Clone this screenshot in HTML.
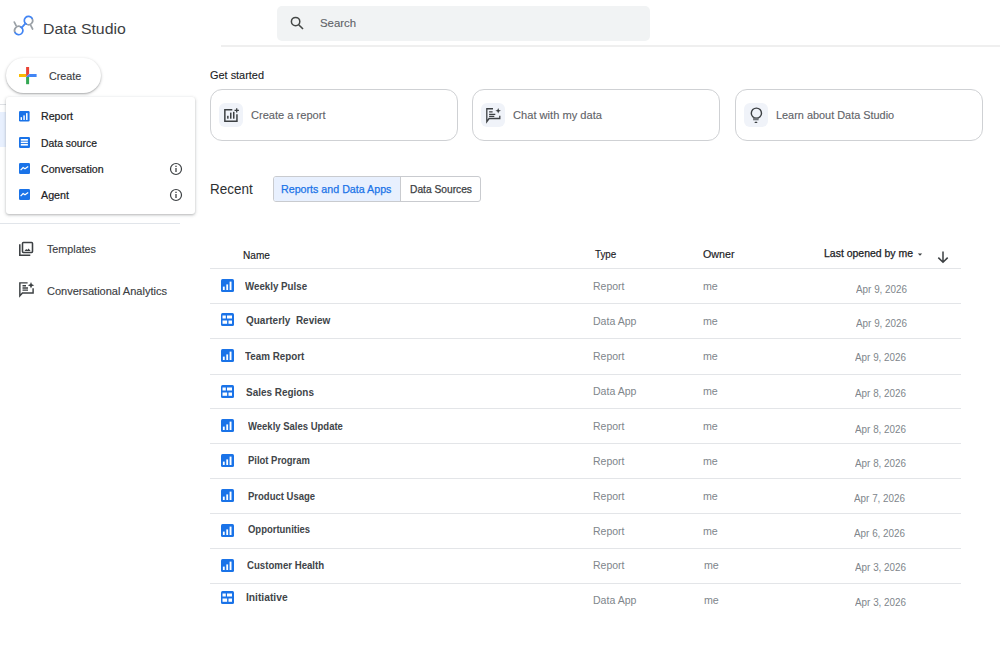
<!DOCTYPE html>
<html><head><meta charset="utf-8">
<style>
*{margin:0;padding:0;box-sizing:border-box}
html,body{width:1000px;height:649px;overflow:hidden;background:#fff}
body{position:relative;font-family:"Liberation Sans",sans-serif;color:#202124}
.a{position:absolute;white-space:nowrap;line-height:1}
.hl{position:absolute;height:1px;background:#dadce0}
.card{position:absolute;top:89px;width:248px;height:52px;border:1px solid #cfd1d4;border-radius:12px;background:#fff}
.ib{position:absolute;left:8px;top:13px;width:24px;height:24px;border-radius:6px;background:#f0f3f9}
.row{position:absolute;left:210px;width:751px;height:1px;background:#e3e5e8}
</style></head><body>
<svg class="a" style="left:10px;top:12px" width="28" height="28" viewBox="0 0 28 28">
 <g fill="none" stroke-width="1.7" stroke-linecap="round">
  <path d="M4.3 10.1L6.1 13.6" stroke="#9aa0a6"/>
  <path d="M20.6 13.1L22.6 17" stroke="#9aa0a6"/>
  <path d="M11.7 15.6L15.5 11.4" stroke="#4285f4"/>
  <path d="M5.1 20.65A4.2 4.2 0 0 1 10.85 14.91" stroke="#9aa0a6"/>
  <path d="M10.85 14.91A4.2 4.2 0 1 1 5.1 20.65" stroke="#4285f4"/>
  <path d="M22.1 6.4A4.2 4.2 0 0 1 16.35 12.14" stroke="#9aa0a6"/>
  <path d="M16.35 12.14A4.2 4.2 0 1 1 22.1 6.4" stroke="#4285f4"/>
 </g>
</svg>
<div class="a" id="t1" style="left:43.20px;top:20.83px;font-size:15.5px;color:#3c4043;transform:scaleX(1.0224);transform-origin:0 0">Data Studio</div>
<div class="a" style="left:277px;top:6px;width:373px;height:34.5px;border-radius:5px;background:#f1f3f4"></div>
<svg class="a" style="left:290px;top:16px" width="14" height="14" viewBox="0 0 14 14"><circle cx="5.6" cy="5.6" r="4.2" fill="none" stroke="#444746" stroke-width="1.5"/><path d="M8.7 8.7L13 13" stroke="#444746" stroke-width="1.6"/></svg>
<div class="a" id="t2" style="left:320.44px;top:17.14px;font-size:11.6px;color:#5f6368;transform:scaleX(0.9845);transform-origin:0 0;-webkit-text-stroke:0.12px #5f6368">Search</div>
<div class="hl" style="left:221px;top:45px;height:2px;width:779px;background:#efefef"></div>
<div class="a" style="left:5.5px;top:58px;width:95px;height:35px;border-radius:18px;background:#fff;box-shadow:0 1px 3px rgba(60,64,67,.36),0 1px 1px rgba(60,64,67,.14)"></div>
<svg class="a" style="left:19px;top:67px" width="18" height="18" viewBox="0 0 18 18">
  <rect x="7.1" y="0" width="3" height="7" fill="#ea4335"/>
  <rect x="7.1" y="10" width="3" height="7.2" fill="#34a853"/>
  <rect x="0" y="7" width="7.1" height="3" fill="#fbbc04"/>
  <rect x="10.1" y="7" width="7.5" height="3" fill="#4285f4"/>
  <path d="M7.1 7H10.1L7.1 10z" fill="#ea4335"/>
  <path d="M10.1 7V10H7.1z" fill="#4285f4"/>
</svg>
<div class="a" id="t3" style="left:49.44px;top:71.28px;font-size:11.2px;color:#3c4043;transform:scaleX(0.9633);transform-origin:0 0;-webkit-text-stroke:0.15px #3c4043">Create</div>
<div class="a" style="left:0;top:112px;width:10px;height:35px;background:#e8f0fe"></div>
<div class="hl" style="left:0;top:104px;width:8px;background:#dfe1e5"></div>
<div class="hl" style="left:0;top:223px;width:180px;background:#e1e5ea"></div>
<div class="a" style="left:6px;top:97px;width:189px;height:117px;background:#fff;border-radius:3px;box-shadow:0 1px 2.5px rgba(60,64,67,.3),0 1px 4px rgba(60,64,67,.12)"></div>
<svg class="a" style="left:19.4px;top:111px" width="10.6" height="10.6" viewBox="0 0 13 13"><rect width="13" height="13" rx="1.5" fill="#1a73e8"/><rect x="1.9" y="7.6" width="1.8" height="3.4" fill="#fff"/><rect x="5.3" y="5.4" width="1.8" height="5.6" fill="#fff"/><rect x="8.6" y="2.6" width="1.9" height="8.4" fill="#fff"/></svg>
<div class="a" id="t4" style="left:41.00px;top:112.33px;font-size:10.2px;color:#202124;transform:scaleX(1.0452);transform-origin:0 0;-webkit-text-stroke:0.2px #202124">Report</div>
<svg class="a" style="left:19.4px;top:137px" width="11" height="11" viewBox="0 0 11 11"><rect width="11" height="11" rx="1.3" fill="#1a73e8"/><rect x="1.8" y="2" width="7.1" height="1.7" fill="#fff"/><rect x="1.8" y="4.6" width="7.1" height="1.4" fill="#fff"/><rect x="1.8" y="6.9" width="7.1" height="1.7" fill="#fff"/></svg>
<div class="a" id="t5" style="left:41.00px;top:138.53px;font-size:10.2px;color:#202124;transform:scaleX(1.0183);transform-origin:0 0;-webkit-text-stroke:0.2px #202124">Data source</div>
<svg class="a" style="left:19.4px;top:163.2px" width="11" height="11" viewBox="0 0 11 11"><rect width="11" height="11" rx="1.3" fill="#1a73e8"/><path d="M1.6 7.1L4.1 4.5 6 5.8 9.2 3.6" fill="none" stroke="#fff" stroke-width="1.2"/></svg>
<div class="a" id="t6" style="left:41.00px;top:164.56px;font-size:10.4px;color:#202124;transform:scaleX(1.0226);transform-origin:0 0;-webkit-text-stroke:0.2px #202124">Conversation</div>
<svg class="a" style="left:19.4px;top:189.4px" width="11" height="11" viewBox="0 0 11 11"><rect width="11" height="11" rx="1.3" fill="#1a73e8"/><path d="M1.6 7.1L4.1 4.5 6 5.8 9.2 3.6" fill="none" stroke="#fff" stroke-width="1.2"/></svg>
<div class="a" id="t7" style="left:41.00px;top:191.14px;font-size:10.4px;color:#202124;transform:scaleX(1.0297);transform-origin:0 0;-webkit-text-stroke:0.2px #202124">Agent</div>
<svg class="a" style="left:169px;top:162px" width="14" height="14" viewBox="0 0 14 14"><circle cx="7" cy="7" r="5.5" fill="none" stroke="#3c4043" stroke-width="1.2"/><rect x="6.35" y="6" width="1.3" height="4" fill="#3c4043"/><rect x="6.35" y="3.7" width="1.3" height="1.3" fill="#3c4043"/></svg>
<svg class="a" style="left:169px;top:188px" width="14" height="14" viewBox="0 0 14 14"><circle cx="7" cy="7" r="5.5" fill="none" stroke="#3c4043" stroke-width="1.2"/><rect x="6.35" y="6" width="1.3" height="4" fill="#3c4043"/><rect x="6.35" y="3.7" width="1.3" height="1.3" fill="#3c4043"/></svg>
<svg class="a" style="left:19px;top:241px" width="15" height="15" viewBox="0 0 15 15"><g fill="none" stroke="#3c4043" stroke-width="1.55"><rect x="3.5" y="1.5" width="10" height="10" rx="0.9"/><path d="M0.8 3.3V14.2H11.3"/></g><path fill="#3c4043" d="M5.5 10l1.7-2 1.1 1.1 1.3-1.5 2 2.4z"/></svg>
<div class="a" id="t8" style="left:46.88px;top:243.65px;font-size:11px;color:#3c4043;transform:scaleX(0.9767);transform-origin:0 0;-webkit-text-stroke:0.15px #3c4043">Templates</div>
<svg class="a" style="left:19px;top:282px" width="16" height="16" viewBox="0 0 16 16"><g fill="none" stroke="#3c4043" stroke-width="1.45"><path d="M8.6 0.85H0.85V13.9L3.4 10.95H14.1V6.3"/><path d="M3.5 3.8H7M3.5 5.9H9M3.5 8.1H9"/></g><path fill="#3c4043" d="M12 0l.95 2.3 2.3.95-2.3.95-.95 2.3-.95-2.3-2.3-.95 2.3-.95z"/></svg>
<div class="a" id="t9" style="left:46.88px;top:285.65px;font-size:11px;color:#3c4043;transform:scaleX(1.0005);transform-origin:0 0;-webkit-text-stroke:0.15px #3c4043">Conversational Analytics</div>
<div class="a" id="t10" style="left:210.00px;top:70.28px;font-size:10.5px;color:#202124;transform:scaleX(1.0396);transform-origin:0 0;-webkit-text-stroke:0.1px #202124">Get started</div>
<div class="card" style="left:210px"><div class="ib"></div></div>
<div class="card" style="left:472px"><div class="ib"></div></div>
<div class="card" style="left:735px"><div class="ib"></div></div>
<svg class="a" style="left:222px;top:107px" width="18" height="18" viewBox="0 0 18 18"><g fill="none" stroke="#3c4043" stroke-width="1.5"><path d="M10.3 2.85H2.85V14.15H14.95V7.3"/><path d="M14.7 1.2V5.6M12.5 3.4H16.9" stroke-width="1.3"/></g><g fill="#3c4043"><rect x="5.1" y="8.8" width="1.5" height="2.9"/><rect x="8" y="5.6" width="1.5" height="6.1"/><rect x="11" y="4.8" width="1.5" height="6.9"/></g></svg>
<div class="a" id="t11" style="left:251.12px;top:109.82px;font-size:10.8px;color:#5f6368;transform:scaleX(1.0262);transform-origin:0 0;-webkit-text-stroke:0.12px #5f6368">Create a report</div>
<svg class="a" style="left:484px;top:106px" width="18" height="18" viewBox="0 0 18 18"><g fill="none" stroke="#3c4043" stroke-width="1.3"><path d="M9 2.75H2.8V15.7L5.1 12.5H15.8V9.8"/><path d="M5.1 5.8H8.6M5.1 8.3H11.3M5.1 10.3H10.3"/></g><path fill="#3c4043" d="M14.2 2l.8 2 2 .8-2 .8-.8 2-.8-2-2-.8 2-.8z"/></svg>
<div class="a" id="t12" style="left:513.06px;top:109.82px;font-size:10.8px;color:#5f6368;transform:scaleX(1.0296);transform-origin:0 0;-webkit-text-stroke:0.12px #5f6368">Chat with my data</div>
<svg class="a" style="left:748px;top:106px" width="16" height="18" viewBox="0 0 16 18"><circle cx="8.4" cy="7.2" r="5.1" fill="none" stroke="#3c4043" stroke-width="1.4"/><rect x="5.1" y="11.7" width="5.5" height="2.6" fill="#6f7378"/><rect x="6.6" y="15.7" width="2.7" height="1.2" rx="0.5" fill="#3c4043"/></svg>
<div class="a" id="t13" style="left:776.06px;top:109.82px;font-size:10.8px;color:#5f6368;transform:scaleX(1.0095);transform-origin:0 0;-webkit-text-stroke:0.12px #5f6368">Learn about Data Studio</div>
<div class="a" id="t14" style="left:209.70px;top:182.04px;font-size:14px;color:#2d2f32;transform:scaleX(0.9623);transform-origin:0 0">Recent</div>
<div class="a" style="left:273px;top:176px;width:208px;height:26px;border:1px solid #c9cbcf;border-radius:3px;background:#fff;overflow:hidden"><div style="position:absolute;left:0;top:0;width:127px;height:24px;background:#e8f0fe;border-right:1px solid #c9cbcf"></div></div>
<div class="a" id="t15" style="left:280.52px;top:184.03px;font-size:10.8px;color:#1a73e8;transform:scaleX(0.9891);transform-origin:0 0;-webkit-text-stroke:0.25px #1a73e8">Reports and Data Apps</div>
<div class="a" id="t16" style="left:409.50px;top:183.75px;font-size:10.8px;color:#3c4043;transform:scaleX(0.9469);transform-origin:0 0;-webkit-text-stroke:0.25px #3c4043">Data Sources</div>
<div class="a" id="t17" style="left:243.12px;top:251.13px;font-size:10.2px;color:#202124;transform:scaleX(0.9897);transform-origin:0 0;-webkit-text-stroke:0.15px #202124">Name</div>
<div class="a" id="t18" style="left:594.62px;top:249.65px;font-size:10.3px;color:#202124;transform:scaleX(0.9543);transform-origin:0 0;-webkit-text-stroke:0.15px #202124">Type</div>
<div class="a" id="t19" style="left:703.38px;top:249.65px;font-size:10.3px;color:#202124;transform:scaleX(1.0373);transform-origin:0 0;-webkit-text-stroke:0.15px #202124">Owner</div>
<div class="a" id="t20" style="left:824.06px;top:249.47px;font-size:10.3px;color:#202124;transform:scaleX(1.0167);transform-origin:0 0;-webkit-text-stroke:0.25px #202124">Last opened by me</div>
<svg class="a" style="left:917px;top:252px" width="6" height="5" viewBox="0 0 6 5"><path d="M0.8 1.5h4.4L3 3.8z" fill="#3c4043"/></svg>
<svg class="a" style="left:936px;top:250px" width="14" height="14" viewBox="0 0 14 14"><path d="M7 1.5v10.5M2.3 7.6L7 12.2l4.7-4.6" fill="none" stroke="#3c4043" stroke-width="1.5"/></svg>
<div class="row" style="top:268px"></div>
<div class="row" style="top:303px"></div>
<div class="row" style="top:338px"></div>
<div class="row" style="top:374px"></div>
<div class="row" style="top:408px"></div>
<div class="row" style="top:443px"></div>
<div class="row" style="top:478px"></div>
<div class="row" style="top:513px"></div>
<div class="row" style="top:548px"></div>
<div class="row" style="top:583px"></div>
<svg class="a" style="left:221.2px;top:279.3px" width="13" height="13" viewBox="0 0 13 13"><rect width="13" height="13" rx="1.5" fill="#1a73e8"/><rect x="1.9" y="7.6" width="1.8" height="3.4" fill="#fff"/><rect x="5.3" y="5.4" width="1.8" height="5.6" fill="#fff"/><rect x="8.6" y="2.6" width="1.9" height="8.4" fill="#fff"/></svg>
<div class="a" id="t21" style="left:244.88px;top:281.93px;font-size:10.2px;color:#414549;font-weight:bold;transform:scaleX(0.9560);transform-origin:0 0">Weekly Pulse</div>
<div class="a" id="t22" style="left:592.52px;top:282.03px;font-size:10.2px;color:#80868b;transform:scaleX(1.0293);transform-origin:0 0">Report</div>
<div class="a" id="t23" style="left:703.38px;top:282.03px;font-size:10.2px;color:#80868b;transform:scaleX(1.0458);transform-origin:0 0">me</div>
<div class="a" id="t24" style="left:855.56px;top:285.33px;font-size:10.2px;color:#80868b;transform:scaleX(0.9702);transform-origin:0 0">Apr 9, 2026</div>
<svg class="a" style="left:221.2px;top:312.8px" width="13" height="13" viewBox="0 0 13 13"><rect width="13" height="13" rx="1.5" fill="#1a73e8"/><rect x="1.5" y="2.5" width="3.3" height="3" fill="#fff"/><rect x="6" y="2.5" width="5" height="3" fill="#fff"/><rect x="1.5" y="7.5" width="4.6" height="3.3" fill="#fff"/><rect x="7.5" y="7.5" width="3.5" height="3.3" fill="#fff"/></svg>
<div class="a" id="t25" style="left:246.00px;top:316.13px;font-size:10.2px;color:#414549;font-weight:bold;transform:scaleX(0.9796);transform-origin:0 0">Quarterly&nbsp; Review</div>
<div class="a" id="t26" style="left:592.52px;top:316.63px;font-size:10.2px;color:#80868b;transform:scaleX(1.0358);transform-origin:0 0">Data App</div>
<div class="a" id="t27" style="left:703.38px;top:316.63px;font-size:10.2px;color:#80868b;transform:scaleX(1.0458);transform-origin:0 0">me</div>
<div class="a" id="t28" style="left:855.56px;top:318.83px;font-size:10.2px;color:#80868b;transform:scaleX(0.9702);transform-origin:0 0">Apr 9, 2026</div>
<svg class="a" style="left:221.2px;top:349.3px" width="13" height="13" viewBox="0 0 13 13"><rect width="13" height="13" rx="1.5" fill="#1a73e8"/><rect x="1.9" y="7.6" width="1.8" height="3.4" fill="#fff"/><rect x="5.3" y="5.4" width="1.8" height="5.6" fill="#fff"/><rect x="8.6" y="2.6" width="1.9" height="8.4" fill="#fff"/></svg>
<div class="a" id="t29" style="left:244.88px;top:351.93px;font-size:10.2px;color:#414549;font-weight:bold;transform:scaleX(0.9637);transform-origin:0 0">Team Report</div>
<div class="a" id="t30" style="left:592.52px;top:351.93px;font-size:10.2px;color:#80868b;transform:scaleX(1.0293);transform-origin:0 0">Report</div>
<div class="a" id="t31" style="left:703.44px;top:351.93px;font-size:10.2px;color:#80868b;transform:scaleX(1.0458);transform-origin:0 0">me</div>
<div class="a" id="t32" style="left:854.94px;top:352.63px;font-size:10.2px;color:#80868b;transform:scaleX(0.9702);transform-origin:0 0">Apr 9, 2026</div>
<svg class="a" style="left:221.2px;top:384.8px" width="13" height="13" viewBox="0 0 13 13"><rect width="13" height="13" rx="1.5" fill="#1a73e8"/><rect x="1.5" y="2.5" width="3.3" height="3" fill="#fff"/><rect x="6" y="2.5" width="5" height="3" fill="#fff"/><rect x="1.5" y="7.5" width="4.6" height="3.3" fill="#fff"/><rect x="7.5" y="7.5" width="3.5" height="3.3" fill="#fff"/></svg>
<div class="a" id="t33" style="left:246.00px;top:388.03px;font-size:10.2px;color:#414549;font-weight:bold;transform:scaleX(0.9752);transform-origin:0 0">Sales Regions</div>
<div class="a" id="t34" style="left:592.52px;top:387.13px;font-size:10.2px;color:#80868b;transform:scaleX(1.0358);transform-origin:0 0">Data App</div>
<div class="a" id="t35" style="left:703.44px;top:387.13px;font-size:10.2px;color:#80868b;transform:scaleX(1.0458);transform-origin:0 0">me</div>
<div class="a" id="t36" style="left:854.94px;top:388.83px;font-size:10.2px;color:#80868b;transform:scaleX(0.9702);transform-origin:0 0">Apr 8, 2026</div>
<svg class="a" style="left:221.2px;top:419.3px" width="13" height="13" viewBox="0 0 13 13"><rect width="13" height="13" rx="1.5" fill="#1a73e8"/><rect x="1.9" y="7.6" width="1.8" height="3.4" fill="#fff"/><rect x="5.3" y="5.4" width="1.8" height="5.6" fill="#fff"/><rect x="8.6" y="2.6" width="1.9" height="8.4" fill="#fff"/></svg>
<div class="a" id="t37" style="left:247.88px;top:422.33px;font-size:10.2px;color:#414549;font-weight:bold;transform:scaleX(0.9326);transform-origin:0 0">Weekly Sales Update</div>
<div class="a" id="t38" style="left:592.52px;top:421.63px;font-size:10.2px;color:#80868b;transform:scaleX(1.0293);transform-origin:0 0">Report</div>
<div class="a" id="t39" style="left:703.44px;top:421.63px;font-size:10.2px;color:#80868b;transform:scaleX(1.0458);transform-origin:0 0">me</div>
<div class="a" id="t40" style="left:854.94px;top:425.33px;font-size:10.2px;color:#80868b;transform:scaleX(0.9702);transform-origin:0 0">Apr 8, 2026</div>
<svg class="a" style="left:221.2px;top:454.2px" width="13" height="13" viewBox="0 0 13 13"><rect width="13" height="13" rx="1.5" fill="#1a73e8"/><rect x="1.9" y="7.6" width="1.8" height="3.4" fill="#fff"/><rect x="5.3" y="5.4" width="1.8" height="5.6" fill="#fff"/><rect x="8.6" y="2.6" width="1.9" height="8.4" fill="#fff"/></svg>
<div class="a" id="t41" style="left:247.88px;top:456.13px;font-size:10.2px;color:#414549;font-weight:bold;transform:scaleX(0.9271);transform-origin:0 0">Pilot Program</div>
<div class="a" id="t42" style="left:592.52px;top:456.53px;font-size:10.2px;color:#80868b;transform:scaleX(1.0293);transform-origin:0 0">Report</div>
<div class="a" id="t43" style="left:703.44px;top:456.53px;font-size:10.2px;color:#80868b;transform:scaleX(1.0458);transform-origin:0 0">me</div>
<div class="a" id="t44" style="left:854.94px;top:458.73px;font-size:10.2px;color:#80868b;transform:scaleX(0.9702);transform-origin:0 0">Apr 8, 2026</div>
<svg class="a" style="left:221.2px;top:489px" width="13" height="13" viewBox="0 0 13 13"><rect width="13" height="13" rx="1.5" fill="#1a73e8"/><rect x="1.9" y="7.6" width="1.8" height="3.4" fill="#fff"/><rect x="5.3" y="5.4" width="1.8" height="5.6" fill="#fff"/><rect x="8.6" y="2.6" width="1.9" height="8.4" fill="#fff"/></svg>
<div class="a" id="t45" style="left:247.88px;top:491.63px;font-size:10.2px;color:#414549;font-weight:bold;transform:scaleX(0.9339);transform-origin:0 0">Product Usage</div>
<div class="a" id="t46" style="left:592.52px;top:491.53px;font-size:10.2px;color:#80868b;transform:scaleX(1.0293);transform-origin:0 0">Report</div>
<div class="a" id="t47" style="left:703.44px;top:491.53px;font-size:10.2px;color:#80868b;transform:scaleX(1.0458);transform-origin:0 0">me</div>
<div class="a" id="t48" style="left:854.00px;top:493.73px;font-size:10.2px;color:#80868b;transform:scaleX(0.9702);transform-origin:0 0">Apr 7, 2026</div>
<svg class="a" style="left:221.2px;top:524px" width="13" height="13" viewBox="0 0 13 13"><rect width="13" height="13" rx="1.5" fill="#1a73e8"/><rect x="1.9" y="7.6" width="1.8" height="3.4" fill="#fff"/><rect x="5.3" y="5.4" width="1.8" height="5.6" fill="#fff"/><rect x="8.6" y="2.6" width="1.9" height="8.4" fill="#fff"/></svg>
<div class="a" id="t49" style="left:247.88px;top:525.43px;font-size:10.2px;color:#414549;font-weight:bold;transform:scaleX(0.9296);transform-origin:0 0">Opportunities</div>
<div class="a" id="t50" style="left:592.52px;top:526.73px;font-size:10.2px;color:#80868b;transform:scaleX(1.0293);transform-origin:0 0">Report</div>
<div class="a" id="t51" style="left:703.44px;top:526.73px;font-size:10.2px;color:#80868b;transform:scaleX(1.0458);transform-origin:0 0">me</div>
<div class="a" id="t52" style="left:854.00px;top:528.63px;font-size:10.2px;color:#80868b;transform:scaleX(0.9702);transform-origin:0 0">Apr 6, 2026</div>
<svg class="a" style="left:221.2px;top:558.8px" width="13" height="13" viewBox="0 0 13 13"><rect width="13" height="13" rx="1.5" fill="#1a73e8"/><rect x="1.9" y="7.6" width="1.8" height="3.4" fill="#fff"/><rect x="5.3" y="5.4" width="1.8" height="5.6" fill="#fff"/><rect x="8.6" y="2.6" width="1.9" height="8.4" fill="#fff"/></svg>
<div class="a" id="t53" style="left:246.50px;top:561.33px;font-size:10.2px;color:#414549;font-weight:bold;transform:scaleX(0.9461);transform-origin:0 0">Customer Health</div>
<div class="a" id="t54" style="left:592.52px;top:561.13px;font-size:10.2px;color:#80868b;transform:scaleX(1.0293);transform-origin:0 0">Report</div>
<div class="a" id="t55" style="left:703.88px;top:561.13px;font-size:10.2px;color:#80868b;transform:scaleX(1.0458);transform-origin:0 0">me</div>
<div class="a" id="t56" style="left:854.94px;top:563.13px;font-size:10.2px;color:#80868b;transform:scaleX(0.9702);transform-origin:0 0">Apr 3, 2026</div>
<svg class="a" style="left:221.2px;top:591.4px" width="13" height="13" viewBox="0 0 13 13"><rect width="13" height="13" rx="1.5" fill="#1a73e8"/><rect x="1.5" y="2.5" width="3.3" height="3" fill="#fff"/><rect x="6" y="2.5" width="5" height="3" fill="#fff"/><rect x="1.5" y="7.5" width="4.6" height="3.3" fill="#fff"/><rect x="7.5" y="7.5" width="3.5" height="3.3" fill="#fff"/></svg>
<div class="a" id="t57" style="left:246.12px;top:592.83px;font-size:10.2px;color:#414549;font-weight:bold;transform:scaleX(1.0063);transform-origin:0 0">Initiative</div>
<div class="a" id="t58" style="left:592.52px;top:596.33px;font-size:10.2px;color:#80868b;transform:scaleX(1.0358);transform-origin:0 0">Data App</div>
<div class="a" id="t59" style="left:704.38px;top:596.33px;font-size:10.2px;color:#80868b;transform:scaleX(1.0458);transform-origin:0 0">me</div>
<div class="a" id="t60" style="left:854.94px;top:597.83px;font-size:10.2px;color:#80868b;transform:scaleX(0.9702);transform-origin:0 0">Apr 3, 2026</div>
</body></html>
